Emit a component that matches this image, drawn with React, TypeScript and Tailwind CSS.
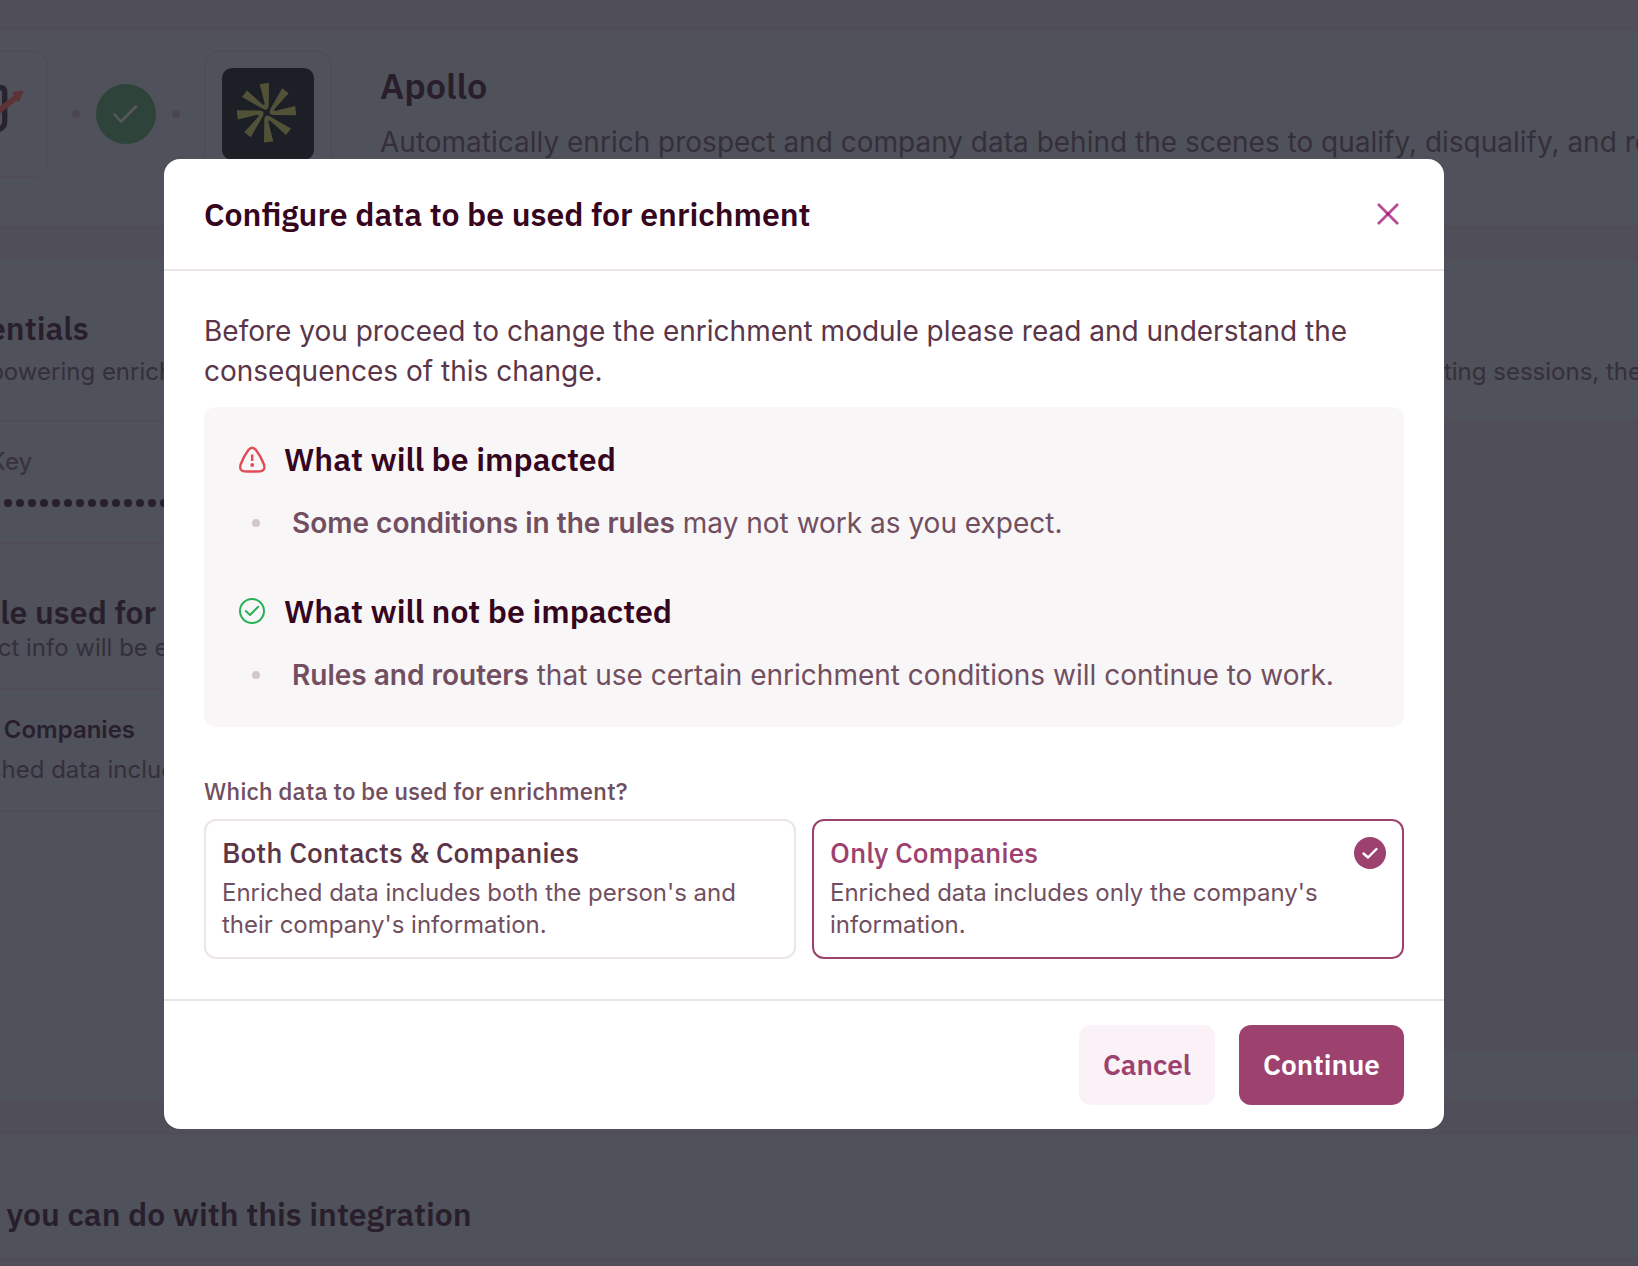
import React, { useState } from 'react';

type DataOption = {
  id: string;
  title: string;
  description: string;
};

const dataOptions: DataOption[] = [
  {
    id: 'both',
    title: 'Both Contacts & Companies',
    description: "Enriched data includes both the person's and their company's information.",
  },
  {
    id: 'companies',
    title: 'Only Companies',
    description: "Enriched data includes only the company's information.",
  },
];

const apiKeyDots = Array.from({ length: 32 }, (_, i) => i);

// --- Icons ---

const HeroLogo = () => (
  <svg viewBox="0 0 92 92" className="size-[92px]" fill="none" aria-hidden="true">
    <path d="M46 19.500H62Q66.700 19.500 66.700 24V54Q66.700 58.500 63 60.500L40 72L17 61Q12 59 12 54V24Q12 19.500 17 19.500Z" stroke="#2b2230" strokeWidth="5.300" />
    <path d="M26 66Q52 50 78 29.500" stroke="#5c3236" strokeWidth="6" />
    <path d="M74.500 24.500L85 23L80.500 34Z" fill="#5c3236" stroke="#5c3236" strokeLinejoin="round" />
  </svg>
);

const ApolloLogo = () => (
  <svg viewBox="0 0 92 92" className="size-[92px]" aria-hidden="true">
    <rect width="92" height="92" rx="10" fill="#1d1f27" />
    {[0, 90, 180, 270].map((angle) => (
      <path
        key={angle}
        transform={`rotate(${angle} 44.500 44.700)`}
        d="M37.700 16L47 15L46.700 38Q46 43.500 41 41L20 29L25 22.500L40 36Q43 38.500 42.500 35Z"
        fill="#525239"
      />
    ))}
  </svg>
);

const CloseIcon = () => (
  <svg viewBox="0 0 32 32" className="size-8" stroke="#99006b" strokeWidth="2.800" strokeLinecap="square" aria-hidden="true">
    <path d="M7 7L25 25" opacity="0.7" />
    <path d="M25 7L7 25" opacity="0.7" />
  </svg>
);

const WarningIcon = () => (
  <svg viewBox="0 0 32 32" className="size-8" fill="none" stroke="#e34a55" strokeWidth="2.400" strokeLinecap="round" aria-hidden="true">
    <path d="M12.600 6.800Q16.200 2.600 19.800 6.800Q25 13.500 28 21.500Q29.800 27.500 24.500 28.200Q16 28.800 8 28.200Q2.800 27.500 4.600 21.500Q7.500 13.500 12.600 6.800Z" />
    <path d="M16.200 11.500V18" strokeLinecap="butt" />
    <circle cx="16.200" cy="22" r="1.900" fill="#e34a55" stroke="none" />
  </svg>
);

const SuccessIcon = () => (
  <svg viewBox="0 0 32 32" className="size-8" fill="none" stroke="#27b155" strokeWidth="2" strokeLinecap="round" strokeLinejoin="round" aria-hidden="true">
    <circle cx="16" cy="16" r="12" />
    <path d="M9.800 16L14 20L22.200 11.800" />
  </svg>
);

const StepDoneIcon = () => (
  <svg viewBox="0 0 60 60" className="size-[60px]" fill="none" aria-hidden="true">
    <circle cx="30" cy="30" r="30" fill="#2e4339" />
    <path d="M18.500 30.500L25 37.500L40 22.500" stroke="#59575f" strokeWidth="2.500" strokeLinecap="round" strokeLinejoin="round" />
  </svg>
);

const SelectedIcon = () => (
  <svg viewBox="0 0 32 32" className="size-8 shrink-0" fill="none" aria-hidden="true">
    <circle cx="16" cy="16" r="16" fill="#9d416f" />
    <path d="M9.500 16.500L14 20.500L22.500 12" stroke="#fff" strokeWidth="2.400" strokeLinecap="round" strokeLinejoin="round" />
  </svg>
);

// --- Page behind the dialog ---

const IntegrationPage = () => (
  <div className="overflow-hidden whitespace-nowrap bg-[#504f59] pt-7 text-2xl leading-8 text-[#352f3a]" aria-hidden="true">
    <section className="border-y-2 border-[#504d56] bg-[#4f525a]">
      <div className="-ml-20 flex items-start gap-12 pt-5 pb-12">
        <div className="flex shrink-0 items-center">
          <div className="flex size-32 items-center justify-center rounded-2xl border-2 border-[#514d58]">
            <HeroLogo />
          </div>
          <span className="ml-6 size-2 rounded-full bg-[#4b4552]" />
          <div className="mx-4">
            <StepDoneIcon />
          </div>
          <span className="mr-6 size-2 rounded-full bg-[#4b4552]" />
          <div className="flex size-32 items-center justify-center rounded-2xl border-2 border-[#514d58]">
            <ApolloLogo />
          </div>
        </div>
        <div className="pt-3">
          <h1 className="font-['IBM_Plex_Sans',sans-serif] text-4xl leading-12 font-semibold text-[#291f2c]">Apollo</h1>
          <p className="pt-3 text-[28px] leading-10">
            Automatically enrich prospect and company data behind the scenes to qualify, disqualify, and route
          </p>
        </div>
      </div>
    </section>

    <section className="mt-[30px] border-y-2 border-[#504d56] bg-[#4f525a]">
      <div className="border-b-2 border-[#504d56] pt-12 pb-8">
        <h2 className="-ml-[82px] font-['IBM_Plex_Sans',sans-serif] text-[32px] leading-10 font-semibold text-[#291f2c]">Credentials</h2>
        <div className="-mr-1 -ml-[82px] flex justify-between pt-2">
          <span>Begin powering enrichment</span>
          <span>routing sessions, the</span>
        </div>
      </div>
      <div className="border-b-2 border-[#504d56] bg-linear-to-r from-[#4f525a] from-50% to-[#504f59] to-80% py-6">
        <p className="-ml-14 font-medium text-[#3b3440]">API Key</p>
        <div className="-ml-14 flex h-10 items-end gap-1 pb-[11px]">
          {apiKeyDots.map((i) => (
            <span key={i} className="size-2 shrink-0 rounded-full bg-[#291f2c]" />
          ))}
        </div>
      </div>
      <div className="bg-linear-to-r from-[#4f525a] from-50% to-[#504f59] to-80%">
        <div className="border-b-2 border-[#504d56] pt-12 pb-6">
          <h2 className="-ml-[82px] font-['IBM_Plex_Sans',sans-serif] text-[32px] leading-10 font-semibold text-[#291f2c]">Module used for</h2>
          <p className="-ml-[82px]">Prospect info will be enriched</p>
        </div>
        <div className="border-b-2 border-[#504d56] py-6">
          <h3 className="-ml-14 font-semibold text-[#291f2c]">Only Companies</h3>
          <p className="-ml-14 pt-2">Enriched data includes</p>
        </div>
        <div className="h-60" />
      </div>
      <div className="h-12" />
    </section>

    <section className="mt-[30px] border-y-2 border-[#504d56] bg-[#4f525a] pt-15 pb-6">
      <h2 className="-ml-20 font-['IBM_Plex_Sans',sans-serif] text-[32px] leading-10 font-semibold text-[#291f2c]">
        What you can do with this integration
      </h2>
    </section>
  </div>
);

// --- Dialog ---

type ImpactProps = {
  icon: React.ReactNode;
  title: string;
  children: React.ReactNode;
};

const Impact = ({ icon, title, children }: ImpactProps) => (
  <div>
    <h3 className="flex items-center gap-4 font-['IBM_Plex_Sans',sans-serif] text-[32px] leading-10 font-semibold text-[#36061f]">
      {icon}
      {title}
    </h3>
    <ul className="pt-6 pl-4">
      <li className="flex items-center gap-8 text-[28px] leading-10 text-[#714f60]">
        <span className="size-2 shrink-0 rounded-full bg-[#d4c6cd]" />
        <span>{children}</span>
      </li>
    </ul>
  </div>
);

const App = () => {
  const [selected, setSelected] = useState('companies');

  return (
    <div className="h-screen overflow-hidden bg-[#504f59] font-[Inter,sans-serif]">
      <IntegrationPage />

      <div className="fixed inset-0 flex items-start justify-center pt-[159px] pr-[30px]">
        <div role="dialog" aria-modal="true" aria-labelledby="dialog-title" className="w-full max-w-7xl rounded-2xl bg-white">
          <header className="flex items-center justify-between border-b-2 border-[#ebe5e8] px-10 py-[35px]">
            <h2 id="dialog-title" className="font-['IBM_Plex_Sans',sans-serif] text-[32px] leading-10 font-semibold text-[#36061f]">
              Configure data to be used for enrichment
            </h2>
            <button type="button" aria-label="Close">
              <CloseIcon />
            </button>
          </header>

          <div className="p-10">
            <p className="text-[28px] leading-10 text-[#5b3548]">
              Before you proceed to change the enrichment module please read and understand the consequences of this change.
            </p>

            <div className="mt-4 flex flex-col gap-12 rounded-xl bg-[#f8f6f7] p-8">
              <Impact icon={<WarningIcon />} title="What will be impacted">
                <strong className="font-semibold">Some conditions in the rules</strong> may not work as you expect.
              </Impact>
              <Impact icon={<SuccessIcon />} title="What will not be impacted">
                <strong className="font-semibold">Rules and routers</strong> that use certain enrichment conditions will continue to work.
              </Impact>
            </div>

            <fieldset className="mt-12">
              <legend className="font-['IBM_Plex_Sans',sans-serif] text-2xl leading-8 font-medium text-[#714f60]">
                Which data to be used for enrichment?
              </legend>
              <div className="mt-3 grid grid-cols-2 gap-4">
                {dataOptions.map((option) => {
                  const isSelected = option.id === selected;
                  return (
                    <label
                      key={option.id}
                      className={`relative cursor-pointer rounded-xl border-2 p-4 ${isSelected ? 'border-[#9d416f]' : 'border-[#ebe5e8]'}`}
                    >
                      <input
                        type="radio"
                        name="enrichment-data"
                        value={option.id}
                        checked={isSelected}
                        onChange={() => setSelected(option.id)}
                        className="sr-only"
                      />
                      <span className="flex items-center justify-between">
                        <span
                          className={`font-['IBM_Plex_Sans',sans-serif] text-[28px] leading-8 font-medium ${isSelected ? 'text-[#9d416f]' : 'text-[#5b3548]'}`}
                        >
                          {option.title}
                        </span>
                        {isSelected && <SelectedIcon />}
                      </span>
                      <span className="block pt-2 pr-10 text-2xl leading-8 text-[#714f60]">{option.description}</span>
                    </label>
                  );
                })}
              </div>
            </fieldset>
          </div>

          <footer className="flex justify-end gap-6 border-t-2 border-[#ebe5e8] px-10 py-6 font-['IBM_Plex_Sans',sans-serif] text-[28px] leading-10 font-semibold">
            <button type="button" className="rounded-xl bg-[#fbf2f7] px-6 py-5 text-[#9d416f]">
              Cancel
            </button>
            <button type="button" className="rounded-xl bg-[#9d416f] px-6 py-5 text-white">
              Continue
            </button>
          </footer>
        </div>
      </div>
    </div>
  );
};

export default App;
